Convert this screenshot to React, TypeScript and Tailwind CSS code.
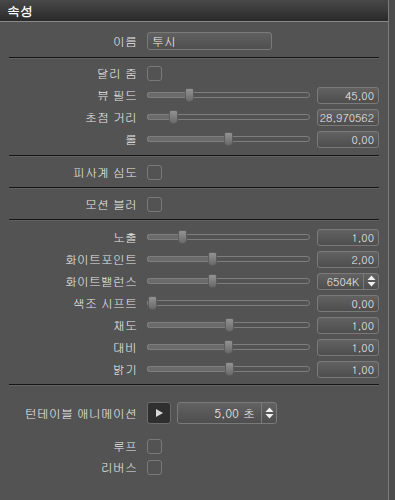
import React from "react";

const FONT = "font-['Gulim','Noto_Sans_CJK_KR','Noto_Sans',sans-serif]";

// thumb: offset in px from the track's left edge
type SliderRow = { label: string; thumb: number; value: string; spin?: boolean };

const cameraRows: SliderRow[] = [
  { label: "뷰 필드", thumb: 38, value: "45,00" },
  { label: "초점 거리", thumb: 22, value: "28,970562" },
  { label: "롤", thumb: 77, value: "0,00" },
];

const colorRows: SliderRow[] = [
  { label: "노출", thumb: 31, value: "1,00" },
  { label: "화이트포인트", thumb: 61, value: "2,00" },
  { label: "화이트밸런스", thumb: 61, value: "6504K", spin: true },
  { label: "색조 시프트", thumb: 1, value: "0,00" },
  { label: "채도", thumb: 78, value: "1,00" },
  { label: "대비", thumb: 77, value: "1,00" },
  { label: "밝기", thumb: 78, value: "1,00" },
];

export default function App() {
  return (
    <div className={`flex h-[500px] w-[395px] overflow-hidden bg-[#535353] text-[12px] text-[#e6e6e6] ${FONT}`}>
      <div className="flex w-[389px] shrink-0 flex-col border-r border-[#7c7c7c]">
        <Header />
        <div className="pt-[10px]">
          <Row label="이름" h="h-[18px]">
            <div className="flex h-[18px] w-[125px] items-center rounded-[3px] border border-[#7a7a7a] bg-gradient-to-b from-[#606060] to-[#4f4f4f] px-[4px] text-[12px] text-[#eeeeee]">
              투시
            </div>
          </Row>
        </div>
        <Separator className="mt-[7px]" />
        <div className="mt-[3px]">
          <Row label="달리 줌">
            <Checkbox />
          </Row>
          {cameraRows.map((r) => (
            <Slider key={r.label} row={r} />
          ))}
        </div>
        <Separator className="mt-[5px]" />
        <div className="mt-[4px]">
          <Row label="피사계 심도">
            <Checkbox />
          </Row>
        </div>
        <Separator className="mt-[4px]" />
        <div className="mt-[4px]">
          <Row label="모션 블러">
            <Checkbox />
          </Row>
        </div>
        <Separator className="mt-[4px]" />
        <div className="mt-[5px]">
          {colorRows.map((r) => (
            <Slider key={r.label} row={r} />
          ))}
        </div>
        <Separator className="mt-[4px]" />
        <div className="mt-[16px]">
          <Row label="턴테이블 애니메이션">
            <div className="flex items-center gap-[6px]">
              <button className="flex h-[22px] w-[24px] items-center justify-center rounded-[3px] border border-[#6c6c6c] bg-[#2f2f2f]">
                <svg width="10" height="10" viewBox="0 0 10 10">
                  <path d="M2 1 L9 5 L2 9 Z" fill="#d8d8d8" />
                </svg>
              </button>
              <div className="flex h-[22px] w-[100px] items-stretch rounded-[3px] border border-[#7a7a7a] bg-gradient-to-b from-[#626262] to-[#4e4e4e]">
                <div className="flex flex-1 items-center justify-end pr-[6px] text-[#eeeeee]">5,00 초</div>
                <SpinArrows />
              </div>
            </div>
          </Row>
        </div>
        <div className="mt-[12px]">
          <Row label="루프" h="h-[20px]">
            <Checkbox />
          </Row>
          <div className="mt-[1px]">
            <Row label="리버스" h="h-[20px]">
              <Checkbox />
            </Row>
          </div>
        </div>
      </div>
      <div className="flex-1 bg-[#4c4c4c]" />
    </div>
  );
}

function Header() {
  return (
    <div className="flex h-[22px] shrink-0 items-center border-b border-[#8a8a8a] bg-gradient-to-b from-[#484848] via-[#3a3a3a] to-[#2a2a2a] px-[7px]">
      <span className="text-[13px] font-bold text-white">속성</span>
    </div>
  );
}

function Row({
  label,
  children,
  h = "h-[22px]",
}: {
  label: string;
  children: React.ReactNode;
  h?: string;
}) {
  return (
    <div className={`flex ${h} items-center`}>
      <div className="w-[137px] shrink-0 whitespace-nowrap text-right leading-none">{label}</div>
      <div className="ml-[10px] flex min-w-0 flex-1 items-center">{children}</div>
    </div>
  );
}

function Separator({ className }: { className: string }) {
  return <div className={`ml-[9px] h-[2px] w-[370px] border-b border-[#626262] bg-[#161616] ${className}`} />;
}

function Checkbox() {
  return <div className="h-[15px] w-[15px] rounded-[3px] border border-[#7a7a7a]" />;
}

function SpinArrows() {
  return (
    <div className="flex w-[15px] shrink-0 items-center justify-center border-l border-[#7a7a7a]">
      <svg width="9" height="12" viewBox="0 0 9 12">
        <path d="M4.5 0.5 L8.5 5 L0.5 5 Z" fill="#f0f0f0" />
        <path d="M0.5 7 L8.5 7 L4.5 11.5 Z" fill="#f0f0f0" />
      </svg>
    </div>
  );
}

function Slider({ row }: { row: SliderRow }) {
  return (
    <Row label={row.label}>
      <div className="relative h-[22px] w-[163px] shrink-0">
        <div className="absolute left-0 top-[8px] h-[6px] w-[163px] rounded-[3px] border border-[#7e7e7e] bg-[#535353]" />
        <div
          className="absolute left-0 top-[8px] h-[6px] rounded-l-[3px] border border-r-0 border-[#7e7e7e] bg-[#6a6a6a]"
          style={{ width: row.thumb + 2 }}
        />
        <div
          className="absolute top-[4px] h-[14px] w-[9px] rounded-t-[2px] rounded-b-[4px] border border-[#5c5c5c] bg-gradient-to-b from-[#939393] to-[#6a6a6a]"
          style={{ left: row.thumb }}
        />
      </div>
      <div className="ml-[7px] flex h-[17px] w-[62px] shrink-0 items-stretch rounded-[3px] border border-[#7a7a7a] bg-gradient-to-b from-[#626262] to-[#4e4e4e] text-[11px] text-[#eeeeee]">
        <div className="flex flex-1 items-center justify-end pr-[4px] leading-none">{row.value}</div>
        {row.spin && <SpinArrows />}
      </div>
    </Row>
  );
}
